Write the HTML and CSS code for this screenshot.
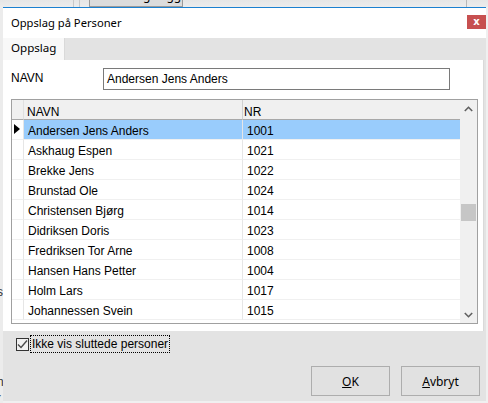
FILE: index.html
```html
<!DOCTYPE html>
<html>
<head>
<meta charset="utf-8">
<link rel="stylesheet" href="styles.css">
</head>
<body>
<div class="app">
  <div class="app-top">
    <div class="app-sep s1"></div>
    <div class="app-sep s2"></div>
    <div class="app-tab"><span>Endringslogg</span></div>
    <div class="app-sep s3"></div>
  </div>
  <div class="app-left">
    <span class="frag f1">s</span>
    <span class="frag f2">n</span>
    <span class="frag f3">(</span>
  </div>
</div>

<div class="dialog">
  <div class="titlebar">
    <span class="title">Oppslag på Personer</span>
    <div class="close">x</div>
  </div>
  <div class="tabstrip">
    <div class="tab">Oppslag</div>
  </div>
  <div class="panel">
    <div class="field">
      <label class="lbl">NAVN</label>
      <div class="input">Andersen Jens Anders</div>
    </div>
    <div class="grid">
      <div class="grid-body">
        <div class="row head">
          <div class="ind"></div>
          <div class="c1">NAVN</div>
          <div class="c2">NR</div>
        </div>
        <div class="row sel">
          <div class="ind"><span class="arrow"></span></div>
          <div class="c1">Andersen Jens Anders</div>
          <div class="c2">1001</div>
        </div>
        <div class="row"><div class="ind"></div><div class="c1">Askhaug Espen</div><div class="c2">1021</div></div>
        <div class="row"><div class="ind"></div><div class="c1">Brekke Jens</div><div class="c2">1022</div></div>
        <div class="row"><div class="ind"></div><div class="c1">Brunstad Ole</div><div class="c2">1024</div></div>
        <div class="row"><div class="ind"></div><div class="c1">Christensen Bjørg</div><div class="c2">1014</div></div>
        <div class="row"><div class="ind"></div><div class="c1">Didriksen Doris</div><div class="c2">1023</div></div>
        <div class="row"><div class="ind"></div><div class="c1">Fredriksen Tor Arne</div><div class="c2">1008</div></div>
        <div class="row"><div class="ind"></div><div class="c1">Hansen Hans Petter</div><div class="c2">1004</div></div>
        <div class="row"><div class="ind"></div><div class="c1">Holm Lars</div><div class="c2">1017</div></div>
        <div class="row"><div class="ind"></div><div class="c1">Johannessen Svein</div><div class="c2">1015</div></div>
      </div>
      <div class="vscroll">
        <div class="sb-btn">
          <svg width="9" height="6" viewBox="0 0 9 6"><path d="M0.8 5 L4.5 1.3 L8.2 5" fill="none" stroke="#606060" stroke-width="1.6"/></svg>
        </div>
        <div class="sb-track">
          <div class="sb-thumb"></div>
        </div>
        <div class="sb-btn">
          <svg width="9" height="6" viewBox="0 0 9 6"><path d="M0.8 1 L4.5 4.7 L8.2 1" fill="none" stroke="#606060" stroke-width="1.6"/></svg>
        </div>
      </div>
    </div>
  </div>
  <div class="bottom">
    <div class="check-row">
      <span class="checkbox">
        <svg width="11" height="11" viewBox="0 0 11 11"><path d="M1 5.5 L4 8.5 L10 1.5" fill="none" stroke="#4a4a4a" stroke-width="1.4"/></svg>
      </span>
      <span class="check-label">Ikke vis sluttede personer</span>
    </div>
    <div class="buttons">
      <button class="btn"><u>O</u>K</button>
      <button class="btn"><u>A</u>vbryt</button>
    </div>
  </div>
</div>
</body>
</html>
```

FILE: styles.css
```css
* { box-sizing: border-box; }
html, body {
  margin: 0;
  padding: 0;
  width: 488px;
  height: 403px;
  overflow: hidden;
  background: #f0f0f0;
  font-family: "Liberation Sans", Arial, sans-serif;
  font-size: 12px;
  color: #000;
}
.app { position: relative; width: 488px; height: 403px; }
.app-top {
  position: relative;
  height: 7px;
  background: linear-gradient(#e6e6e6, #ececec);
  overflow: hidden;
}
.app-sep { position: absolute; top: 0; width: 1px; height: 7px; background: #c8c8c8; }
.app-sep.s1 { left: 73px; }
.app-sep.s2 { left: 79px; }
.app-sep.s3 { left: 466px; background: #b8b8b8; }
.app-tab {
  position: absolute;
  left: 89px;
  top: -2px;
  width: 94px;
  height: 9px;
  background: #dcdcdc;
  border: 1px solid #9a9a9a;
  overflow: hidden;
  font-family: "Noto Sans", sans-serif;
  font-size: 12px;
}
.app-tab span { position: absolute; left: 16px; top: -12px; }
.app-left {
  position: absolute;
  left: 0;
  top: 7px;
  width: 3px;
  height: 396px;
  background: #ececec;
  overflow: hidden;
}
.frag { position: absolute; left: -3px; font-size: 12px; color: #333; }
.frag.f1 { top: 278px; }
.frag.f2 { top: 368px; }
.frag.f3 { top: 386px; }

.dialog {
  position: absolute;
  left: 3px;
  top: 7px;
  width: 483px;
  height: 394px;
  background: #e3e3e3;
  border-top: 1px solid #1b80d0;
  display: flex;
  flex-direction: column;
}
.titlebar {
  height: 30px;
  background: #fff;
  display: flex;
  align-items: flex-start;
  justify-content: space-between;
  font-family: "Noto Sans", "Open Sans", sans-serif;
  font-size: 11.2px;
}
.title { padding-left: 8px; padding-top: 7px; color: #000; }
.close {
  margin-top: 7px;
  width: 19px;
  height: 14px;
  background: #c75050;
  color: #fff;
  font-family: "DejaVu Sans", sans-serif;
  font-weight: bold;
  font-size: 10px;
  line-height: 13px;
  text-align: center;
}
.tabstrip {
  height: 22px;
  background: #e3e3e3;
  display: flex;
  align-items: flex-end;
}
.tab {
  width: 62px;
  height: 22px;
  background: #f8f8f8;
  border-right: 1px solid #d9d9d9;
  font-family: "Noto Sans", "Open Sans", sans-serif;
  font-size: 11.6px;
  padding-left: 8px;
  line-height: 19px;
}
.panel {
  height: 271px;
  width: 481px;
  background: #fff;
  border-right: 1px solid #d9d9d9;
  padding: 8px 0 0 8px;
}
.field { display: flex; align-items: flex-start; height: 31px; }
.lbl { width: 92px; padding-top: 3px; }
.input {
  width: 347px;
  height: 22px;
  border: 1px solid #7a7a7a;
  padding-left: 3px;
  line-height: 20px;
  font-size: 12px;
}
.grid {
  width: 467px;
  height: 225px;
  border: 1px solid #a0a0a0;
  display: flex;
  overflow: hidden;
}
.grid-body { width: 448px; }
.row { display: flex; height: 20px; line-height: 16px; font-size: 12px; }
.row > div { border-bottom: 1px solid #f0f0f0; padding-top: 3px; }
.ind { width: 12px; border-right: 1px solid #e6e6e6; position: relative; }
.c1 { width: 219px; padding-left: 4px; border-right: 1px solid #e6e6e6; }
.c2 { width: 217px; padding-left: 4px; }
.row.head > div { background: #f0f0f0; border-bottom: 1px solid #a8a8a8; padding-top: 4px; }
.row.head .ind { border-right: 1px solid #e0e0e0; }
.row.head .c1 { border-right: 1px solid #d0d0d0; padding-left: 3px; }
.row.head .c2 { padding-left: 1px; }
.row.sel .c1, .row.sel .c2 { background: #99ccfc; }
.arrow {
  position: absolute;
  left: 2px;
  top: 4px;
  width: 0;
  height: 0;
  border-top: 5.5px solid transparent;
  border-bottom: 5.5px solid transparent;
  border-left: 6px solid #000;
}
.vscroll {
  width: 17px;
  background: #f0f0f0;
  display: flex;
  flex-direction: column;
}
.sb-btn { height: 17px; display: flex; align-items: center; justify-content: center; }
.sb-track { flex: 1; position: relative; }
.sb-thumb {
  position: absolute;
  left: 1px;
  top: 87px;
  width: 15px;
  height: 17px;
  background: #c6c6c6;
}
.bottom { flex: 1; position: relative; padding: 4px 0 0 13px; }
.check-row { display: flex; align-items: center; height: 18px; }
.checkbox {
  width: 13px;
  height: 13px;
  border: 1px solid #333;
  background: #f0f0f0;
  display: flex;
  align-items: center;
  justify-content: center;
  margin-right: 1px;
}
.check-label {
  border: 1px dotted #000;
  padding: 0 1px;
  line-height: 16px;
  font-size: 12px;
}
.buttons {
  display: flex;
  justify-content: flex-end;
  gap: 11px;
  padding-right: 6px;
  margin-top: 13px;
}
.btn {
  width: 79px;
  height: 30px;
  background: #e1e1e1;
  border: 1px solid #adadad;
  font-family: "Noto Sans", "Open Sans", sans-serif;
  font-size: 12px;
  color: #000;
  padding: 0;
}
```
